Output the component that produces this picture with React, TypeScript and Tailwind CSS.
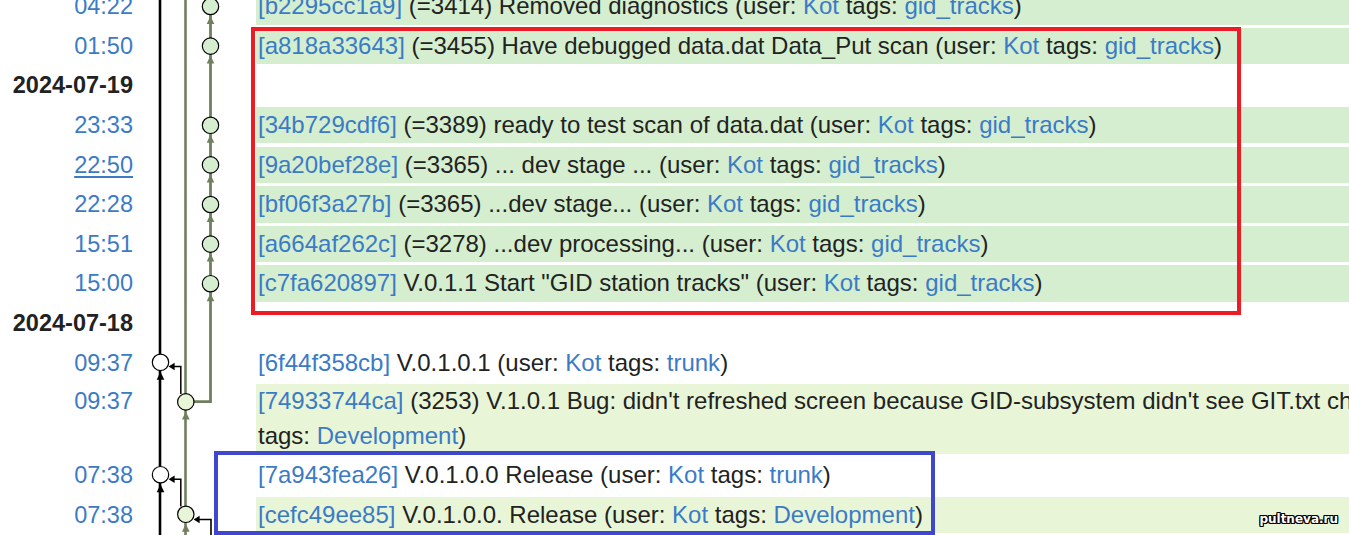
import React from 'react';

type Entry = {
  kind: 'entry';
  time: string;
  hash: string;
  msg: string;
  tag: string;
  bg: string;
  underline?: boolean;
  twoLine?: boolean;
};
type DateRow = { kind: 'date'; label: string };
type Row = Entry | DateRow;

const G1 = 'bg-[#d4eecf]';
const G2 = 'bg-[#e8f5d7]';

const rows: Row[] = [
  { kind: 'entry', time: '04:22', hash: 'b2295cc1a9', msg: '(=3414) Removed diagnostics', tag: 'gid_tracks', bg: G1 },
  { kind: 'entry', time: '01:50', hash: 'a818a33643', msg: '(=3455) Have debugged data.dat Data_Put scan', tag: 'gid_tracks', bg: G1 },
  { kind: 'date', label: '2024-07-19' },
  { kind: 'entry', time: '23:33', hash: '34b729cdf6', msg: '(=3389) ready to test scan of data.dat', tag: 'gid_tracks', bg: G1 },
  { kind: 'entry', time: '22:50', hash: '9a20bef28e', msg: '(=3365) ... dev stage ...', tag: 'gid_tracks', bg: G1, underline: true },
  { kind: 'entry', time: '22:28', hash: 'bf06f3a27b', msg: '(=3365) ...dev stage...', tag: 'gid_tracks', bg: G1 },
  { kind: 'entry', time: '15:51', hash: 'a664af262c', msg: '(=3278) ...dev processing...', tag: 'gid_tracks', bg: G1 },
  { kind: 'entry', time: '15:00', hash: 'c7fa620897', msg: 'V.0.1.1 Start "GID station tracks"', tag: 'gid_tracks', bg: G1 },
  { kind: 'date', label: '2024-07-18' },
  { kind: 'entry', time: '09:37', hash: '6f44f358cb', msg: 'V.0.1.0.1', tag: 'trunk', bg: 'bg-white' },
  { kind: 'entry', time: '09:37', hash: '74933744ca', msg: "(3253) V.1.0.1 Bug: didn't refreshed screen because GID-subsystem didn't see GIT.txt changes", tag: 'Development', bg: G2, twoLine: true },
  { kind: 'entry', time: '07:38', hash: '7a943fea26', msg: 'V.0.1.0.0 Release', tag: 'trunk', bg: 'bg-white' },
  { kind: 'entry', time: '07:38', hash: 'cefc49ee85', msg: 'V.0.1.0.0. Release', tag: 'Development', bg: G2 },
];

const LINK = 'text-[#3b7bc6]';
const GREEN = '#70805f';

function Node({ cx, cy, fill, arrow }: { cx: number; cy: number; fill: string; arrow: string }) {
  return (
    <g>
      <polygon points={`${cx},${cy + 9.5} ${cx - 3.8},${cy + 17.5} ${cx + 3.8},${cy + 17.5}`} fill={arrow} />
      <circle cx={cx} cy={cy} r={8.2} fill={fill} stroke="#000" strokeWidth={1.2} />
    </g>
  );
}

function Graph() {
  const upper = [6.5, 46.1, 125.3, 164.9, 204.5, 244.1, 283.7];
  return (
    <svg className="absolute left-0 top-0 pointer-events-none" width={256} height={535} viewBox="0 0 256 535">
      <line x1={160} y1={0} x2={160} y2={535} stroke="#000" strokeWidth={2.6} />
      <line x1={185.5} y1={0} x2={185.5} y2={535} stroke={GREEN} strokeWidth={2.6} />
      <path d="M210.5 0 V401.7 H192" fill="none" stroke={GREEN} strokeWidth={2.8} strokeLinejoin="miter" />
      <path d="M180.8 394 V366.5 H173" fill="none" stroke="#000" strokeWidth={1.5} />
      <polygon points="168.6,366.5 174.6,362.8 174.6,370.2" fill="#000" />
      <path d="M180.8 506.5 V479.3 H173" fill="none" stroke="#000" strokeWidth={1.5} />
      <polygon points="168.6,479.3 174.6,475.6 174.6,483" fill="#000" />
      <path d="M211 535 V519.5 H199" fill="none" stroke="#000" strokeWidth={1.6} />
      <polygon points="193.6,519.5 199.6,515.8 199.6,523.2" fill="#000" />
      {upper.map((cy, i) => (
        <Node key={i} cx={210.5} cy={cy} fill="#d4eecf" arrow={GREEN} />
      ))}
      <Node cx={185.8} cy={401.9} fill="#e8f5d7" arrow={GREEN} />
      <Node cx={185.8} cy={514.3} fill="#e8f5d7" arrow={GREEN} />
      <Node cx={160.5} cy={362.3} fill="#fff" arrow="#000" />
      <Node cx={160.5} cy={474.7} fill="#fff" arrow="#000" />
    </svg>
  );
}

export default function App() {
  return (
    <div className="relative w-[1349px] h-[535px] overflow-hidden bg-white font-['Liberation_Sans',Arial,sans-serif] text-[23.5px] text-[#222]">
      <div className="flex flex-col gap-[3.2px] -mt-[11.7px]">
        {rows.map((r, i) =>
          r.kind === 'date' ? (
            <div key={i} className="grid grid-cols-[133px_123px_1fr] h-[36.4px] leading-[36.4px]">
              <div className="text-right font-bold whitespace-nowrap">{r.label}</div>
              <div />
              <div />
            </div>
          ) : (
            <div
              key={i}
              className={`grid grid-cols-[133px_123px_1fr] ${r.twoLine ? 'h-[70px] leading-[34.8px]' : 'h-[36.4px] leading-[36.4px]'}`}
            >
              <div className={`text-right whitespace-nowrap ${LINK} ${r.underline ? 'underline underline-offset-[3px]' : ''}`}>{r.time}</div>
              <div />
              <div className={`${r.bg} pl-[2px] whitespace-nowrap text-[24px]`}>
                {r.twoLine ? (
                  <>
                    <span className={LINK}>[{r.hash}]</span> {r.msg} (user: <span className={LINK}>Kot</span>
                    <br />
                    tags: <span className={LINK}>{r.tag}</span>)
                  </>
                ) : (
                  <>
                    <span className={LINK}>[{r.hash}]</span> {r.msg} (user: <span className={LINK}>Kot</span> tags:{' '}
                    <span className={LINK}>{r.tag}</span>)
                  </>
                )}
              </div>
            </div>
          )
        )}
      </div>
      <Graph />
      <div className="absolute left-[251px] top-[27.3px] w-[990px] h-[287.4px] border-[4.7px] border-[#ed1c24] pointer-events-none" />
      <div className="absolute left-[214px] top-[451px] w-[721px] h-[84px] border-[4.7px] border-[#3f48cc] pointer-events-none" />
      <div className="absolute right-[11px] bottom-[9px] font-['DejaVu_Sans',sans-serif] font-bold text-[12px] leading-[14px] text-white [text-shadow:1px_1px_0_#000,-1px_-1px_0_#000,1px_-1px_0_#000,-1px_1px_0_#000,0_1px_0_#000,0_-1px_0_#000,1px_0_0_#000,-1px_0_0_#000]">
        pultneva.ru
      </div>
    </div>
  );
}
